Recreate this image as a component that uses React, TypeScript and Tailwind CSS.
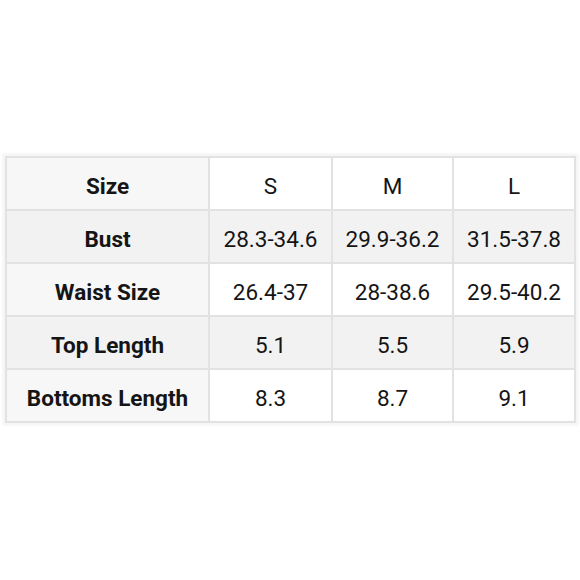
import React from "react";

const rows = [
  ["Size", "S", "M", "L"],
  ["Bust", "28.3-34.6", "29.9-36.2", "31.5-37.8"],
  ["Waist Size", "26.4-37", "28-38.6", "29.5-40.2"],
  ["Top Length", "5.1", "5.5", "5.9"],
  ["Bottoms Length", "8.3", "8.7", "9.1"],
];

export default function App() {
  return (
    <div className="w-[580px] h-[580px] bg-white flex items-start justify-center pt-[156px] pl-[1px]" style={{ fontFamily: "Roboto, 'Liberation Sans', sans-serif" }}>
      <div className="w-[571px] shadow-[0_0_0_2px_#f6f6f6,0_0_3px_2px_#f0f0f0]">
        <table className="w-full border-collapse border-2 border-[#e2e2e2] text-[#151515] text-[22.5px]">
          <colgroup>
            <col className="w-[203px]" />
            <col className="w-[123px]" />
            <col className="w-[121px]" />
            <col className="w-[122px]" />
          </colgroup>
          <tbody>
            {rows.map((r, i) => (
              <tr key={i} className={i % 2 === 1 ? "bg-[#f2f2f2]" : "bg-white"}>
                {r.map((c, j) => (
                  <td
                    key={j}
                    className={`h-[53px] border-2 border-[#e2e2e2] text-center px-0 pt-[5px] pb-0 leading-none ${j === 0 ? "font-bold" : "font-normal"} ${j === 0 && i % 2 === 0 ? "bg-[#f7f7f7]" : ""}`}
                  >
                    {c}
                  </td>
                ))}
              </tr>
            ))}
          </tbody>
        </table>
      </div>
    </div>
  );
}
